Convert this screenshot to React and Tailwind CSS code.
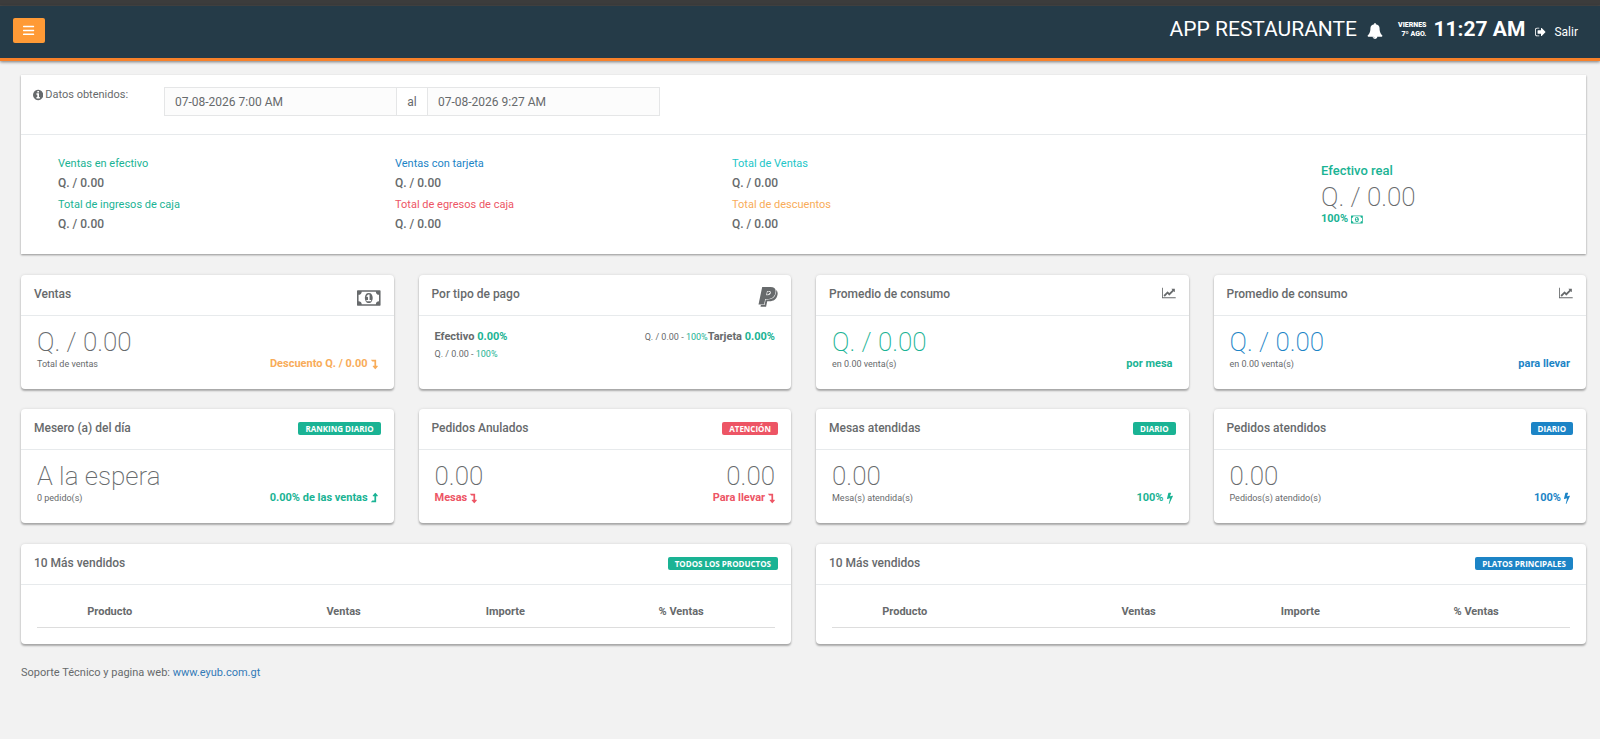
const ICONS = {
  bars: {
    box: '0 0 1536 1792',
    d: 'M64 240h1408q64 0 64 64v84q0 64-64 64h-1408q-64 0-64-64v-84q0-64 64-64zm0 540h1408q64 0 64 64v84q0 64-64 64h-1408q-64 0-64-64v-84q0-64 64-64zm0 540h1408q64 0 64 64v84q0 64-64 64h-1408q-64 0-64-64v-84q0-64 64-64z',
  },
  bell: {
    box: '0 0 1792 1792',
    d: 'M912 1696q0-16-16-16-59 0-101.5-42.5t-42.5-101.5q0-16-16-16t-16 16q0 73 51.5 124.5t124.5 51.5q16 0 16-16zm816-288q0 52-38 90t-90 38h-448q0 106-75 181t-181 75-181-75-75-181h-448q-52 0-90-38t-38-90q50-42 91-88t85-119.5 74.5-158.5 50-206 19.5-260q0-152 117-282.5t307-158.5q-8-19-8-39 0-40 28-68t68-28 68 28 28 68q0 20-8 39 190 28 307 158.5t117 282.5q0 139 19.5 260t50 206 74.5 158.5 85 119.5 91 88z',
  },
  signOut: {
    box: '0 0 1664 1792',
    d: 'M640 1440q0 4 1 20t.5 26.5-3 23.5-10 19.5-20.5 6.5h-320q-119 0-203.5-84.5t-84.5-203.5v-704q0-119 84.5-203.5t203.5-84.5h320q13 0 22.5 9.5t9.5 22.5q0 4 1 20t.5 26.5-3 23.5-10 19.5-20.5 6.5h-320q-66 0-113 47t-47 113v704q0 66 47 113t113 47h312l11.5 1 11.5 3 8 5.5 7 9 2 13.5zm928-544q0 26-19 45l-544 544q-19 19-45 19t-45-19-19-45v-288h-448q-26 0-45-19t-19-45v-384q0-26 19-45t45-19h448v-288q0-26 19-45t45-19 45 19l544 544q19 19 19 45z',
  },
  info: {
    box: '128 0 1536 1792',
    d: 'M1152 1376v-160q0-14-9-23t-23-9h-96v-512q0-14-9-23t-23-9h-320q-14 0-23 9t-9 23v160q0 14 9 23t23 9h96v320h-96q-14 0-23 9t-9 23v160q0 14 9 23t23 9h448q14 0 23-9t9-23zm-128-896v-160q0-14-9-23t-23-9h-192q-14 0-23 9t-9 23v160q0 14 9 23t23 9h192q14 0 23-9t9-23zm640 416q0 209-103 385.5t-279.5 279.5-385.5 103-385.5-103-279.5-279.5-103-385.5 103-385.5 279.5-279.5 385.5-103 385.5 103 279.5 279.5 103 385.5z',
  },
  money: {
    box: '0 0 1920 1792',
    d: 'M768 1152h384v-96h-128v-448h-114l-148 137 77 80q42-37 55-57h2v288h-128v96zm512-256q0 70-21 142t-59.5 134-101.5 101-138 39-138-39-101.5-101-59.5-134-21-142 21-142 59.5-134 101.5-101 138-39 138 39 101.5 101 59.5 134 21 142zm512 256v-512q-106 0-181-75t-75-181h-1152q0 106-75 181t-181 75v512q106 0 181 75t75 181h1152q0-106 75-181t181-75zm128-832v1152q0 26-19 45t-45 19h-1792q-26 0-45-19t-19-45v-1152q0-26 19-45t45-19h1792q26 0 45 19t19 45z',
  },
  chart: {
    box: '0 0 2048 1792',
    d: 'M2048 1536v128h-2048v-1536h128v1408h1920zm-128-1248v435q0 21-19.5 29.5t-35.5-7.5l-121-121-633 633q-10 10-23 10t-23-10l-233-233-416 416-192-192 585-585q10-10 23-10t23 10l233 233 464-464-121-121q-16-16-7.5-35.5t29.5-19.5h435q14 0 23 9t9 23z',
  },
  bolt: {
    box: '448 0 896 1792',
    d: 'M1333 566q18 20 7 44l-540 1157q-13 25-42 25-4 0-14-2-17-5-25.5-19t-4.5-30l197-808-406 101q-4 1-12 1-18 0-31-11-18-15-13-39l201-825q4-14 16-23t28-9h328q19 0 32 12.5t13 29.5q0 8-5 18l-171 463 396-98q8-2 12-2 19 0 34 15z',
  },
  levelDown: {
    box: '0 0 1024 1792',
    d: 'M32 256h704q13 0 22.5 9.5t9.5 23.5v863h192q40 0 58 37 17 37-9 68l-320 384q-18 22-49 22t-49-22l-320-384q-27-30-9-68 18-37 58-37h192v-640h-320q-14 0-25-11l-160-192q-13-14-4-34 9-19 29-19z',
  },
  levelUp: {
    box: '0 0 1024 1792',
    d: 'M32 1536h704q13 0 22.5-9.5t9.5-23.5v-863h192q40 0 58-37 17-37-9-68l-320-384q-18-22-49-22t-49 22l-320 384q-27 30-9 68 18 37 58 37h192v640h-320q-14 0-25 11l-160 192q-13 14-4 34 9 19 29 19z',
  },
};

const PAYPAL_MARK =
  'M4.2 0H12.5C16.5 0 18.2 2 17.5 5.5C16.7 10 13.5 12 9.5 12H7.2L6.1 17.5H0.5ZM9 4L8.2 8.2H9.8C11.5 8.2 12.4 7.4 12.7 6C12.9 4.6 12.2 4 10.8 4Z';

const Icon = ({ name, className }) => (
  <svg viewBox={ICONS[name].box} fill="currentColor" aria-hidden="true" className={`inline-block shrink-0 ${className}`}>
    <path d={ICONS[name].d} />
  </svg>
);

const PaypalIcon = () => (
  <svg viewBox="0 0 20 20" fillRule="evenodd" aria-hidden="true" className="size-5 shrink-0">
    <path d={PAYPAL_MARK} transform="translate(2 2.3)" fill="#676a6c" />
    <path d={PAYPAL_MARK} fill="#676a6c" stroke="#ffffff" strokeWidth="1.2" paintOrder="stroke" />
  </svg>
);

const TOTALS = [
  [
    { label: 'Ventas en efectivo', color: 'text-[#1ab394]' },
    { label: 'Total de ingresos de caja', color: 'text-[#1ab394]' },
  ],
  [
    { label: 'Ventas con tarjeta', color: 'text-[#1c84c6]' },
    { label: 'Total de egresos de caja', color: 'text-[#ed5565]' },
  ],
  [
    { label: 'Total de Ventas', color: 'text-[#23c6c8]' },
    { label: 'Total de descuentos', color: 'text-[#f8ac59]' },
  ],
];

const Card = ({ title, extra, children }) => (
  <section className="rounded-sm bg-white shadow-[0_2px_2px_rgba(0,0,0,0.28),0_0_3px_rgba(0,0,0,0.12)]">
    <header className="flex h-[41px] items-start justify-between border-b border-[#e7eaec] px-[13px] pt-3">
      <h5 className="text-xs leading-[14px] font-medium">{title}</h5>
      {extra}
    </header>
    {children}
  </section>
);

const Badge = ({ color, children }) => (
  <span className={`mt-px rounded-xs px-[7px] font-['Open_Sans',sans-serif] text-[8px] leading-[13px] font-bold text-white ${color}`}>
    {children}
  </span>
);

const Stat = ({ value, valueColor = '', note, right, rightColor }) => (
  <div className="h-[73px] px-4 pt-3">
    <p className={`text-[26px] leading-7 font-extralight ${valueColor}`}>{value}</p>
    <div className="flex items-center justify-between">
      <small className="text-[9px] leading-4">{note}</small>
      <strong className={`flex items-center gap-[3px] text-[11px] leading-4 font-bold ${rightColor}`}>{right}</strong>
    </div>
  </div>
);

const TopTable = () => (
  <div className="px-4 pt-[17px] pb-4">
    <table className="w-full table-fixed text-[11px]">
      <thead>
        <tr className="border-b border-[#dddddd]">
          <td className="w-[6%]" />
          <th className="w-[32%] px-[6px] pb-[5px] text-left leading-5 font-bold">Producto</th>
          <th className="w-[22%] px-[9px] pb-[5px] text-left leading-5 font-bold">Ventas</th>
          <th className="w-[23%] px-[6px] pb-[5px] text-left leading-5 font-bold">Importe</th>
          <th className="w-[17%] px-[9px] pb-[5px] text-left leading-5 font-bold">% Ventas</th>
        </tr>
      </thead>
    </table>
  </div>
);

export default function App() {
  return (
    <div className="min-h-screen bg-[#f2f2f2] font-[Roboto,sans-serif] text-[13px] text-[#676a6c]">
      <div className="h-[6px] border-b border-[#464646] bg-[#3c3c3c]" />
      <nav className="flex h-[55px] items-start justify-between border-b-3 border-[#f8812a] bg-[#253b48] pr-[22px] pl-[13px] text-white shadow-[0_1px_3px_rgba(0,0,0,0.5)]">
        <button type="button" aria-label="Menú" className="mt-3 flex h-[25px] w-8 items-center justify-center rounded-xs bg-[#ff9a36]">
          <Icon name="bars" className="h-[13px]" />
        </button>
        <div className="flex h-12 items-center">
          <span className="text-[21px]">APP RESTAURANTE</span>
          <Icon name="bell" className="mt-px ml-[10px] h-4" />
          <span className="ml-[15px] text-right text-[7px] leading-[9px] font-black">
            VIERNES
            <br />
            7º AGO.
          </span>
          <span className="ml-[7px] text-[21px] font-bold">11:27 AM</span>
          <a href="#salir" className="mt-1 ml-[10px] flex items-center gap-2 text-xs">
            <Icon name="signOut" className="h-3" />
            Salir
          </a>
        </div>
      </nav>

      <main className="flex flex-col gap-[21px] pt-[14px] pr-[14px] pl-[21px]">
        <section className="bg-white shadow-[0_1px_2px_rgba(0,0,0,0.4)]">
          <div className="flex items-start border-b border-[#e7eaec] px-3 pt-3 pb-[18px]">
            <label htmlFor="desde" className="flex w-[131px] items-center gap-[2px] text-[11px] leading-4">
              <Icon name="info" className="h-3" />
              Datos obtenidos:
            </label>
            <div className="flex h-[29px] text-xs">
              <input id="desde" defaultValue="07-08-2026 7:00 AM" className="w-[233px] border border-[#e5e6e7] bg-[#fcfcfc] px-[10px]" />
              <span className="flex w-[30px] items-center justify-center border-y border-[#e5e6e7]">al</span>
              <input aria-label="Hasta" defaultValue="07-08-2026 9:27 AM" className="w-[233px] border border-[#e5e6e7] bg-[#fcfcfc] px-[10px]" />
            </div>
          </div>
          <div className="grid h-[119px] grid-cols-[337fr_337fr_589fr_265fr] pt-[18px] pl-[37px]">
            {TOTALS.map((column, i) => (
              <div key={i}>
                {column.map((item) => (
                  <div key={item.label} className="pb-[3px]">
                    <p className={`text-[11px] leading-[22px] ${item.color}`}>{item.label}</p>
                    <p className="text-xs leading-4 font-medium">Q. / 0.00</p>
                  </div>
                ))}
              </div>
            ))}
            <div className="pt-2 text-[#1ab394]">
              <p className="text-[13px] leading-5 font-medium">Efectivo real</p>
              <p className="text-[26px] leading-8 font-extralight text-[#676a6c]">Q. / 0.00</p>
              <p className="flex items-center gap-[3px] text-[11px] leading-3 font-bold">
                100% <Icon name="money" className="h-[11px]" />
              </p>
            </div>
          </div>
        </section>

        <div className="grid grid-cols-4 gap-x-[25px] gap-y-5">
          <Card title="Ventas" extra={<Icon name="money" className="h-[22px]" />}>
            <Stat
              value="Q. / 0.00"
              note="Total de ventas"
              right={<>Descuento Q. / 0.00 <Icon name="levelDown" className="h-3" /></>}
              rightColor="text-[#f8ac59]"
            />
          </Card>
          <Card title="Por tipo de pago" extra={<PaypalIcon />}>
            <div className="flex items-start justify-between px-4 pt-3">
              <div>
                <p className="text-[11px] leading-[18px] font-bold">
                  Efectivo <span className="text-[#1ab394]">0.00%</span>
                </p>
                <p className="text-[9px] leading-4">
                  Q. / 0.00 - <span className="text-[#1ab394]">100%</span>
                </p>
              </div>
              <p className="text-[9px] leading-[18px]">
                Q. / 0.00 - <span className="text-[#1ab394]">100%</span>
                <strong className="text-[11px] font-bold">
                  Tarjeta <span className="text-[#1ab394]">0.00%</span>
                </strong>
              </p>
            </div>
          </Card>
          <Card title="Promedio de consumo" extra={<Icon name="chart" className="h-3" />}>
            <Stat value="Q. / 0.00" valueColor="text-[#1ab394]" note="en 0.00 venta(s)" right="por mesa" rightColor="text-[#1ab394]" />
          </Card>
          <Card title="Promedio de consumo" extra={<Icon name="chart" className="h-3" />}>
            <Stat value="Q. / 0.00" valueColor="text-[#1c84c6]" note="en 0.00 venta(s)" right="para llevar" rightColor="text-[#1c84c6]" />
          </Card>

          <Card title="Mesero (a) del día" extra={<Badge color="bg-[#1ab394]">RANKING DIARIO</Badge>}>
            <Stat
              value="A la espera"
              note="0 pedido(s)"
              right={<>0.00% de las ventas <Icon name="levelUp" className="h-3" /></>}
              rightColor="text-[#1ab394]"
            />
          </Card>
          <Card title="Pedidos Anulados" extra={<Badge color="bg-[#ed5565]">ATENCIÓN</Badge>}>
            <div className="flex justify-between px-4 pt-3">
              {['Mesas', 'Para llevar'].map((label) => (
                <div key={label} className="flex flex-col first:items-start last:items-end">
                  <p className="text-[26px] leading-7 font-extralight">0.00</p>
                  <strong className="flex items-center gap-[3px] text-[11px] leading-4 font-bold text-[#ed5565]">
                    {label} <Icon name="levelDown" className="h-3" />
                  </strong>
                </div>
              ))}
            </div>
          </Card>
          <Card title="Mesas atendidas" extra={<Badge color="bg-[#1ab394]">DIARIO</Badge>}>
            <Stat value="0.00" note="Mesa(s) atendida(s)" right={<>100% <Icon name="bolt" className="h-3" /></>} rightColor="text-[#1ab394]" />
          </Card>
          <Card title="Pedidos atendidos" extra={<Badge color="bg-[#1c84c6]">DIARIO</Badge>}>
            <Stat value="0.00" note="Pedidos(s) atendido(s)" right={<>100% <Icon name="bolt" className="h-3" /></>} rightColor="text-[#1c84c6]" />
          </Card>
        </div>

        <div className="grid grid-cols-2 gap-x-[25px]">
          <Card title="10 Más vendidos" extra={<Badge color="bg-[#1ab394]">TODOS LOS PRODUCTOS</Badge>}>
            <TopTable />
          </Card>
          <Card title="10 Más vendidos" extra={<Badge color="bg-[#1c84c6]">PLATOS PRINCIPALES</Badge>}>
            <TopTable />
          </Card>
        </div>
      </main>

      <footer className="pt-[21px] pl-[21px] text-[11px] leading-4">
        Soporte Técnico y pagina web: <a href="http://www.eyub.com.gt" className="text-[#337ab7]">www.eyub.com.gt</a>
      </footer>
    </div>
  );
}
